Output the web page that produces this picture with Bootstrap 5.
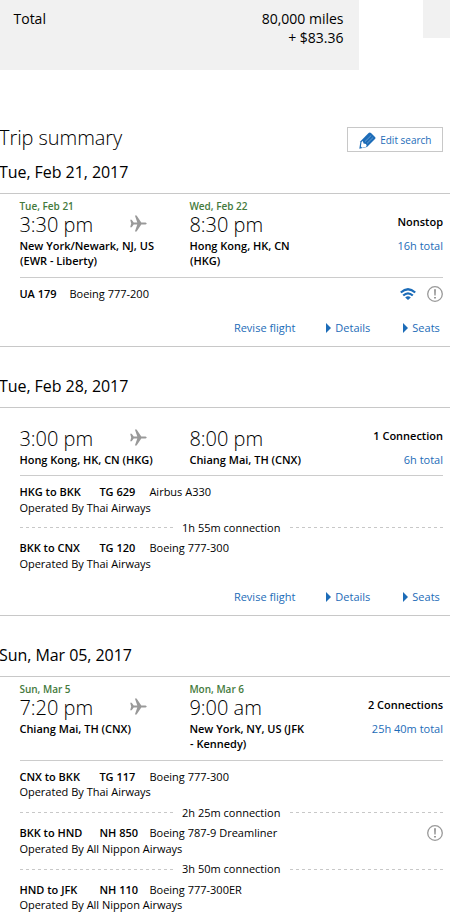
<!DOCTYPE html>
<html lang="en">
<head>
<meta charset="utf-8">
<meta name="viewport" content="width=device-width, initial-scale=1">
<title>Trip summary</title>
<link href="https://cdn.jsdelivr.net/npm/bootstrap@5.3.0/dist/css/bootstrap.min.css" rel="stylesheet">
<style>
body{font-family:"Open Sans",sans-serif;font-size:11px;line-height:15.5px;color:#000;background:#fff;height:917px;overflow:hidden}
a{color:#1c6cb8;text-decoration:none}
.fare-strip{height:70px}
.fare-total{width:359px;height:70px;background:#f1f1f1;padding:9px 15.5px 0 13.5px;font-size:14px;line-height:19px}
.fare-side{width:27px;height:38px;background:#f1f1f1}
.trip-head{padding:57px 7px 0 0;height:89px}
.trip-title{font-size:20px;font-weight:300;line-height:22px;margin:0 0 0 -1px;letter-spacing:-.06px}
.btn-edit{width:96px;height:25px;border:1px solid #c8c8c8;border-radius:0;font-size:10px;line-height:14px;color:#1c6cb8;padding:1px 10.5px 0 11px}
.trip-date{font-size:16px;font-weight:400;line-height:22px;height:34px;margin:0 0 0 -1px;padding-top:2px;letter-spacing:-.06px}
.trip{border-top:1px solid #c8c8c8;border-bottom:1px solid #c8c8c8;padding:0 7px 0 20px;margin-bottom:26px}
.trip-long{border-bottom:0;margin-bottom:0}
.trip-mid .segs{padding-bottom:.25px}
.leg{height:84px;border-bottom:1px solid #ccc;padding-top:6px;text-indent:-.6px}
.leg-short{height:68px}
.leg-from{width:170px}
.leg-to{width:125px}
.leg-day{height:12px;line-height:13px;font-size:10px;font-weight:600;color:#447a3c}
.leg-time{height:25.5px;line-height:25px;font-size:20px;font-weight:300}
.leg-clock{width:110px}
.leg-plane{width:17px;height:17px;margin-top:2.5px}
.leg-info{padding-top:14px}
.leg-info a{display:block;margin-top:8.5px}
.semi{font-weight:600}
.segs{padding-top:8px;text-indent:-.6px}
.trip-long .segs{padding-top:7.75px}
.seg-row{height:15.5px}
.seg-single{margin-bottom:1px}
.seg-route{width:80px}
.seg-flight{width:50px}
.layover{height:25.25px}
.trip-long .layover{height:25.5px}
.dash{height:1px;width:153px;background:repeating-linear-gradient(90deg,#c8c8c8 0 3px,transparent 3px 6px)}
.actions{height:43.5px;padding-top:17.25px;padding-right:3.2px}
.actions svg{width:5px;height:10px;margin-right:4.5px;vertical-align:-1px}
.act-details{margin-left:30.5px}
.act-seats{margin-left:32.5px}
</style>
<script src="https://cdn.jsdelivr.net/npm/bootstrap@5.3.0/dist/js/bootstrap.bundle.min.js"></script>
</head>
<body>
<svg class="d-none" xmlns="http://www.w3.org/2000/svg">
  <symbol id="plane" viewBox="0 0 17 17"><path fill="#999" d="M.2 4.8h1.5l2 2.7h3.6L4.9.5h1.7l4.7 6.9h3.1c1.4 0 2.3.6 2.3 1.1s-.9 1.1-2.3 1.1h-3.1l-4.7 6.9H4.9l2.4-7H3.7l-2 2.7H.2l1-3.7z"/></symbol>
  <symbol id="warn" viewBox="0 0 16 16"><circle cx="8" cy="8" r="7.3" fill="none" stroke="#999" stroke-width="1.3"/><path fill="#999" d="M7 3.2h2l-.3 6.4H7.3zM7 10.9h2v1.7H7z"/></symbol>
  <symbol id="wifi" viewBox="0 0 16 12"><path fill="none" stroke="#1c6cb8" stroke-width="2.2" d="M.8 4.5Q8-2 15.2 4.5M3.2 7.5Q8 3.1 12.8 7.5"/><path fill="#1c6cb8" d="M5.2 9.4Q8 7 10.8 9.4L8 12z"/></symbol>
  <symbol id="tri" viewBox="0 0 5 10"><path fill="#1c6cb8" d="M0 0l5 5-5 5z"/></symbol>
</svg>

<div class="fare-strip d-flex justify-content-between align-items-start">
  <div class="fare-total d-flex justify-content-between">
    <span>Total</span>
    <div class="text-end">80,000 miles<br>+ $83.36</div>
  </div>
  <div class="fare-side"></div>
</div>

<header class="trip-head d-flex justify-content-between align-items-start">
  <h1 class="trip-title">Trip summary</h1>
  <button class="btn btn-edit d-flex align-items-center justify-content-between">
    <svg width="17" height="17" viewBox="0 0 17 17"><path fill="#1c6cb8" d="M.3 16.7L1.5 9.2 9.6 1Q10.8-.1 12 1L16 4.9Q17 6 16 7.1L8 15z"/><path fill="#fff" d="M2.5 9.9l1.3-.8.8 2.4 2.4.4.7 2.2-1 1-3.6.6-1.2-1.3z"/><path stroke="#fff" stroke-opacity=".45" stroke-width=".7" d="M6 9.6l6.2-6.1M8 11.4l6.2-6"/></svg>
    <span>Edit search</span>
  </button>
</header>

<h2 class="trip-date">Tue, Feb 21, 2017</h2>
<section class="trip">
  <div class="leg d-flex">
    <div class="leg-from"><div class="leg-day">Tue, Feb 21</div>
      <div class="leg-time d-flex"><span class="leg-clock">3:30 pm</span><svg class="leg-plane"><use href="#plane"/></svg></div>
      <div class="semi">New York/Newark, NJ, US<br>(EWR - Liberty)</div></div>
    <div class="leg-to"><div class="leg-day">Wed, Feb 22</div><div class="leg-time">8:30 pm</div><div class="semi">Hong Kong, HK, CN<br>(HKG)</div></div>
    <div class="leg-info ms-auto text-end"><span class="semi">Nonstop</span><a href="#">16h total</a></div>
  </div>
  <div class="segs">
    <div class="seg-row seg-single d-flex align-items-center"><span class="seg-flight semi">UA 179</span><span>Boeing 777-200</span>
      <svg class="ms-auto" width="16" height="12"><use href="#wifi"/></svg><svg class="ms-2" width="19" height="16" viewBox="-3 0 19 16"><use href="#warn" width="16" height="16"/></svg></div>
  </div>
  <div class="actions d-flex justify-content-end"><a href="#">Revise flight</a><a href="#" class="act-details"><svg><use href="#tri"/></svg>Details</a><a href="#" class="act-seats"><svg><use href="#tri"/></svg>Seats</a></div>
</section>

<h2 class="trip-date">Tue, Feb 28, 2017</h2>
<section class="trip trip-mid">
  <div class="leg leg-short d-flex">
    <div class="leg-from"><div class="leg-day"></div>
      <div class="leg-time d-flex"><span class="leg-clock">3:00 pm</span><svg class="leg-plane"><use href="#plane"/></svg></div>
      <div class="semi">Hong Kong, HK, CN (HKG)</div></div>
    <div class="leg-to"><div class="leg-day"></div><div class="leg-time">8:00 pm</div><div class="semi">Chiang Mai, TH (CNX)</div></div>
    <div class="leg-info ms-auto text-end"><span class="semi">1 Connection</span><a href="#">6h total</a></div>
  </div>
  <div class="segs">
    <div class="seg-row d-flex"><span class="seg-route semi">HKG to BKK</span><span class="seg-flight semi">TG 629</span><span>Airbus A330</span></div>
    <div class="seg-row">Operated By Thai Airways</div>
    <div class="layover d-flex align-items-center justify-content-between"><span class="dash"></span><span>1h 55m connection</span><span class="dash"></span></div>
    <div class="seg-row d-flex"><span class="seg-route semi">BKK to CNX</span><span class="seg-flight semi">TG 120</span><span>Boeing 777-300</span></div>
    <div class="seg-row">Operated By Thai Airways</div>
  </div>
  <div class="actions d-flex justify-content-end"><a href="#">Revise flight</a><a href="#" class="act-details"><svg><use href="#tri"/></svg>Details</a><a href="#" class="act-seats"><svg><use href="#tri"/></svg>Seats</a></div>
</section>

<h2 class="trip-date">Sun, Mar 05, 2017</h2>
<section class="trip trip-long">
  <div class="leg d-flex">
    <div class="leg-from"><div class="leg-day">Sun, Mar 5</div>
      <div class="leg-time d-flex"><span class="leg-clock">7:20 pm</span><svg class="leg-plane"><use href="#plane"/></svg></div>
      <div class="semi">Chiang Mai, TH (CNX)</div></div>
    <div class="leg-to"><div class="leg-day">Mon, Mar 6</div><div class="leg-time">9:00 am</div><div class="semi">New York, NY, US (JFK<br>- Kennedy)</div></div>
    <div class="leg-info ms-auto text-end"><span class="semi">2 Connections</span><a href="#">25h 40m total</a></div>
  </div>
  <div class="segs">
    <div class="seg-row d-flex"><span class="seg-route semi">CNX to BKK</span><span class="seg-flight semi">TG 117</span><span>Boeing 777-300</span></div>
    <div class="seg-row">Operated By Thai Airways</div>
    <div class="layover d-flex align-items-center justify-content-between"><span class="dash"></span><span>2h 25m connection</span><span class="dash"></span></div>
    <div class="seg-row d-flex align-items-center"><span class="seg-route semi">BKK to HND</span><span class="seg-flight semi">NH 850</span><span>Boeing 787-9 Dreamliner</span><svg class="ms-auto" width="16" height="16"><use href="#warn"/></svg></div>
    <div class="seg-row">Operated By All Nippon Airways</div>
    <div class="layover d-flex align-items-center justify-content-between"><span class="dash"></span><span>3h 50m connection</span><span class="dash"></span></div>
    <div class="seg-row d-flex"><span class="seg-route semi">HND to JFK</span><span class="seg-flight semi">NH 110</span><span>Boeing 777-300ER</span></div>
    <div class="seg-row">Operated By All Nippon Airways</div>
  </div>
</section>
</body>
</html>
